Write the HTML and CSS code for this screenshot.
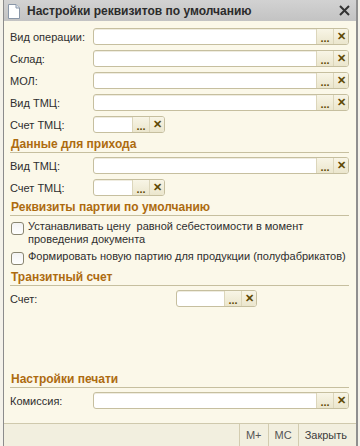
FILE: index.html
```html
<!DOCTYPE html>
<html lang="ru">
<head>
    <meta charset="UTF-8">
    <title>Настройки реквизитов по умолчанию</title>
    <link rel="stylesheet" href="styles.css">
</head>
<body>
    <div class="window">
        <div class="titlebar">
            <svg class="doc-icon" width="12" height="15" viewBox="0 0 12 15">
                <path d="M0.5 0.5 H8 L11.5 4 V14.5 H0.5 Z" fill="#fff" stroke="#8a97a8"/>
                <path d="M8 0.5 V4 H11.5" fill="#dfe5ee" stroke="#8a97a8"/>
            </svg>
            <span class="title">Настройки реквизитов по умолчанию</span>
            <svg class="close-icon" width="11" height="11" viewBox="0 0 11 11">
                <path d="M1 1 L10 10 M10 1 L1 10" stroke="#333" stroke-width="2"/>
            </svg>
        </div>

        <div class="content">
            <div class="row">
                <span class="label">Вид операции:</span>
                <div class="field wide"><span class="input"></span><span class="btn dots">...</span><span class="btn clear">✕</span></div>
            </div>
            <div class="row">
                <span class="label">Склад:</span>
                <div class="field wide"><span class="input"></span><span class="btn dots">...</span><span class="btn clear">✕</span></div>
            </div>
            <div class="row">
                <span class="label">МОЛ:</span>
                <div class="field wide"><span class="input"></span><span class="btn dots">...</span><span class="btn clear">✕</span></div>
            </div>
            <div class="row">
                <span class="label">Вид ТМЦ:</span>
                <div class="field wide"><span class="input"></span><span class="btn dots">...</span><span class="btn clear">✕</span></div>
            </div>
            <div class="row">
                <span class="label">Счет ТМЦ:</span>
                <div class="field short"><span class="input"></span><span class="btn dots">...</span><span class="btn clear">✕</span></div>
            </div>

            <div class="section">Данные для прихода</div>
            <div class="row">
                <span class="label">Вид ТМЦ:</span>
                <div class="field wide"><span class="input"></span><span class="btn dots">...</span><span class="btn clear">✕</span></div>
            </div>
            <div class="row">
                <span class="label">Счет ТМЦ:</span>
                <div class="field short"><span class="input"></span><span class="btn dots">...</span><span class="btn clear">✕</span></div>
            </div>

            <div class="section">Реквизиты партии по умолчанию</div>
            <label class="check">
                <span class="box"></span>
                <span class="check-text">Устанавливать цену &nbsp;равной себестоимости в момент<br>проведения документа</span>
            </label>
            <label class="check">
                <span class="box"></span>
                <span class="check-text">Формировать новую партию для продукции (полуфабрикатов)</span>
            </label>

            <div class="section">Транзитный счет</div>
            <div class="row">
                <span class="label label-wide">Счет:</span>
                <div class="field transit"><span class="input"></span><span class="btn dots">...</span><span class="btn clear">✕</span></div>
            </div>

            <div class="section bottom">Настройки печати</div>
            <div class="row">
                <span class="label">Комиссия:</span>
                <div class="field wide"><span class="input"></span><span class="btn dots">...</span><span class="btn clear">✕</span></div>
            </div>
        </div>

        <div class="footer">
            <span class="foot-btn">M+</span>
            <span class="foot-btn">MC</span>
            <span class="foot-btn close-btn">Закрыть</span>
        </div>
    </div>
</body>
</html>
```

FILE: styles.css
```css
/* Окно формы 1С */
html, body {
    margin: 0;
    padding: 0;
    width: 360px;
    height: 446px;
    overflow: hidden;
    font-family: 'Liberation Sans', Arial, sans-serif;
    font-size: 11px;
    color: #2e2e2e;
    background: #f4f2ea;
}

.window {
    margin-left: 3px;
    width: 352px;
    height: 446px;
    display: flex;
    flex-direction: column;
    border-left: 1px solid #8c8c8c;
    border-right: 2px solid #8f8f8f;
    background: #fbf8e9;
}

/* Заголовок */
.titlebar {
    height: 21px;
    display: flex;
    align-items: center;
    background: linear-gradient(#d2d2d2, #c3c3c3);
    padding: 0 5px 0 4px;
}

.doc-icon {
    margin-top: 1px;
}

.title {
    margin-left: 7px;
    font-size: 12px;
    font-weight: bold;
    color: #2b2b2b;
    flex: 1;
}

.close-icon {
    margin-right: 1px;
}

/* Содержимое */
.content {
    flex: 1;
    display: flex;
    flex-direction: column;
    padding: 7px 7px 9px 6px;
}

.row {
    display: flex;
    align-items: center;
    height: 17px;
    margin-bottom: 5px;
}

.label {
    width: 83px;
    flex: none;
}

.label-wide {
    width: 166px;
}

.field {
    display: flex;
    height: 15px;
    border: 1px solid #c6bf9f;
    border-radius: 3px;
    background: #fff;
    overflow: hidden;
    box-shadow: inset 0 1px 0 #efece0;
}

.field.wide {
    flex: 1;
}

.field.short {
    width: 70px;
}

.field.transit {
    width: 79px;
}

.input {
    flex: 1;
}

.btn {
    width: 15px;
    display: flex;
    align-items: center;
    justify-content: center;
    background: linear-gradient(#f8f5e6, #ebe6cd);
    border-left: 1px solid #dcd6bb;
    color: #5e4a05;
    font-weight: bold;
    font-size: 11px;
}

.btn.dots {
    align-items: flex-end;
    line-height: 12px;
    width: 16px;
}

.btn.clear {
    font-size: 11px;
    width: 14px;
}

/* Заголовки групп */
.section {
    height: 15px;
    line-height: 15px;
    margin-top: -1px;
    margin-bottom: 4px;
    padding-left: 1px;
    font-weight: bold;
    font-size: 12px;
    color: #ad6b10;
    border-bottom: 1px solid #c6bf9f;
}

.check + .section {
    margin-top: 1px;
}

.section.bottom {
    margin-top: auto;
}

/* Флажки */
.check {
    display: flex;
    align-items: flex-start;
    margin-bottom: 4px;
    padding-left: 1px;
}

.box {
    flex: none;
    width: 11px;
    height: 11px;
    margin-top: 2px;
    margin-right: 4px;
    border: 1px solid #8a8672;
    border-radius: 3px;
    background: linear-gradient(#f3f3f3, #fff);
}

.check-text {
    line-height: 13px;
}

/* Нижняя панель */
.footer {
    height: 22px;
    display: flex;
    justify-content: flex-end;
    align-items: stretch;
    background: #f2efdf;
    border-top: 1px solid #cfc9ad;
    padding-right: 3px;
}

.foot-btn {
    display: flex;
    align-items: center;
    padding: 0 6px;
    border-left: 1px solid #d3ccb0;
    color: #555;
}

.close-btn {
    color: #3d3d3d;
}
```
